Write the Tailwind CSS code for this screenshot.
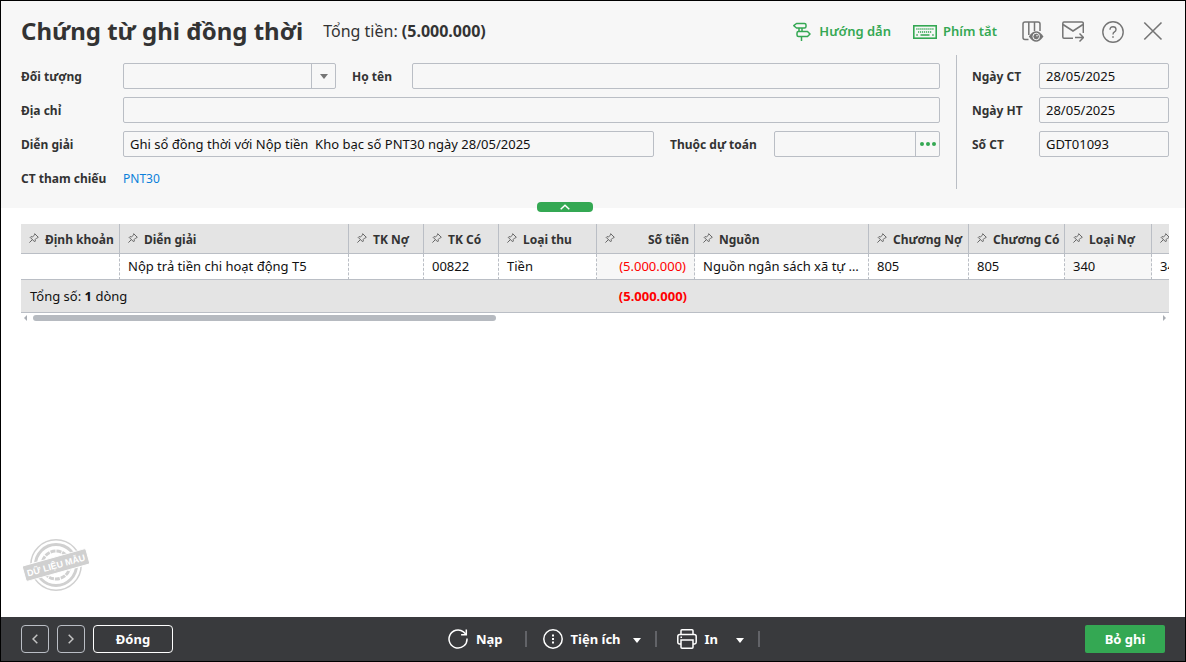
<!DOCTYPE html>
<html lang="vi">
<head>
    <meta charset="UTF-8">
    <meta name="viewport" content="width=device-width, initial-scale=1.0">
    <title>Chứng từ ghi đồng thời</title>
    <script src="https://cdn.jsdelivr.net/npm/@tailwindcss/browser@4"></script>
</head>
<body class="font-['Noto_Sans',sans-serif] text-[13px] text-[#111]">
<div class="flex flex-col min-h-screen border border-black bg-white">

    <!-- Header -->
    <header class="relative bg-[#f7f7f7]">
        <div class="flex items-center h-[54px] pt-1.5 pl-5 pr-[21px]">
            <h1 class="text-2xl font-bold text-[#333]">Chứng từ ghi đồng thời</h1>
            <p class="ml-5 text-base text-[#333]">Tổng tiền: <b>(5.000.000)</b></p>
            <div class="flex items-center ml-auto pt-0.5 text-[#34a853] font-semibold">
                <a href="#" class="flex items-center gap-2">
                    <svg class="w-[18px] h-5" viewBox="0 0 18 20" fill="none" stroke="currentColor" stroke-width="1.500" stroke-linejoin="round">
                        <path d="M3.500 1.500h8q1.500 0 1.500 1.500v1.500q0 1.500-1.500 1.500h-8L.8 3.700z"/>
                        <path d="M6 6v3M9 6v3"/>
                        <path d="M14.500 9.500H5.500Q4 9.500 4 11v2q0 1.500 1.500 1.500h9l2.500-2.500z"/>
                        <path d="M8.500 14.500V19"/>
                    </svg>
                    Hướng dẫn
                </a>
                <a href="#" class="flex items-center gap-1.5 ml-[22px]">
                    <svg class="w-6 h-[14px]" viewBox="0 0 24 14" fill="none" stroke="currentColor">
                        <rect x=".8" y=".8" width="22.400" height="12.400" stroke-width="1.600"/>
                        <path d="M3.300 4h17.600M5 7h14" stroke-width="1.400" stroke-dasharray="1.200 .8"/>
                        <path d="M3.300 10h1.500M7.500 10h9M19.200 10h1.500" stroke-width="1.600"/>
                    </svg>
                    Phím tắt
                </a>
            </div>
            <div class="flex items-center gap-[18px] ml-[25px] pt-0.5 text-[#757575]">
                <button type="button" aria-label="Tùy chỉnh cột">
                    <svg class="w-[22px] h-[22px]" viewBox="0 0 22 22" fill="none" stroke="currentColor" stroke-width="1.500">
                        <path d="M6.500 18.500H3Q1 18.500 1 16.500V3Q1 1 3 1h13q2 0 2 2v7M6.800 1v13M12.500 1v9"/>
                        <path d="M6.800 15.500q7.200-10.500 14.700 0q-7.500 10.500-14.700 0z" fill="currentColor" stroke="none"/>
                        <circle cx="14.200" cy="15.500" r="3.300" fill="currentColor" stroke="#f7f7f7" stroke-width="1"/>
                        <circle cx="15" cy="14.700" r=".8" fill="#f7f7f7" stroke="none"/>
                    </svg>
                </button>
                <button type="button" aria-label="Gửi thư">
                    <svg class="w-[22px] h-[22px]" viewBox="0 0 22 22" fill="none" stroke="currentColor" stroke-width="1.500">
                        <path d="M11 17.200H2Q.8 17.200.8 16V2.500Q.8 1 2 1h18q1.300 0 1.300 1.500V12"/>
                        <path d="M1 3.500l10 6.500 10-6.500M13 16.500h8M17.500 12.500l4 4-4 4"/>
                    </svg>
                </button>
                <button type="button" aria-label="Trợ giúp">
                    <svg class="w-[22px] h-[22px]" viewBox="0 0 22 22" fill="none" stroke="currentColor" stroke-width="1.400">
                        <circle cx="11" cy="11" r="10.200"/>
                        <path d="M8 8.700q0-2.900 3-2.900t3 2.700q0 1.500-1.500 2.400T11 13.500"/>
                        <path d="M11 15.200v1.600" stroke-width="1.600"/>
                    </svg>
                </button>
                <button type="button" aria-label="Đóng cửa sổ">
                    <svg class="w-[22px] h-[22px]" viewBox="0 0 22 22" fill="none" stroke="currentColor" stroke-width="1.600">
                        <path d="M2.300 1.500l17.200 17M19.500 1.500l-17.200 17"/>
                    </svg>
                </button>
            </div>
        </div>

        <form class="flex items-start pl-5 pr-4 pb-[17px]">
            <div class="flex-1 flex flex-col gap-2 pt-2">
                <div class="flex items-center h-[26px]">
                    <label for="object" class="w-[102px] pt-0.5 text-xs font-bold text-[#333]">Đối tượng</label>
                    <div class="relative w-[213px] h-full">
                        <select id="object" class="appearance-none w-full h-full border border-[#babec5] rounded-xs px-1.5"><option></option></select>
                        <span class="absolute right-0 top-0 flex items-center justify-center w-[25px] h-full border-l border-[#babec5] pointer-events-none">
                            <svg class="w-2 h-[5px]" viewBox="0 0 8 5" fill="#757575"><path d="M0 0h8L4 5z"/></svg>
                        </span>
                    </div>
                    <label for="fullname" class="w-[60px] ml-4 pt-0.5 text-xs font-bold text-[#333]">Họ tên</label>
                    <input id="fullname" type="text" class="flex-1 h-full border border-[#babec5] rounded-xs px-1.5">
                </div>
                <div class="flex items-center h-[26px]">
                    <label for="address" class="w-[102px] pt-0.5 text-xs font-bold text-[#333]">Địa chỉ</label>
                    <input id="address" type="text" class="flex-1 h-full border border-[#babec5] rounded-xs px-1.5">
                </div>
                <div class="flex items-center h-[26px]">
                    <label for="description" class="w-[102px] pt-0.5 text-xs font-bold text-[#333]">Diễn giải</label>
                    <input id="description" type="text" value="Ghi sổ đồng thời với Nộp tiền  Kho bạc số PNT30 ngày 28/05/2025" class="flex-1 h-full border border-[#babec5] rounded-xs px-1.5">
                    <label for="estimate" class="w-[104px] ml-4 pt-0.5 text-xs font-bold text-[#333]">Thuộc dự toán</label>
                    <div class="flex w-[166px] h-full border border-[#babec5] rounded-xs">
                        <input id="estimate" type="text" class="flex-1 min-w-0 px-1.5">
                        <button type="button" aria-label="Chọn dự toán" class="flex items-center justify-center w-6 border-l border-[#babec5]">
                            <svg class="w-4 h-1" viewBox="0 0 16 4" fill="#34a853"><circle cx="2" cy="2" r="2"/><circle cx="8" cy="2" r="2"/><circle cx="14" cy="2" r="2"/></svg>
                        </button>
                    </div>
                </div>
                <div class="flex items-center h-[26px]">
                    <span class="w-[102px] pt-0.5 text-xs font-bold text-[#333]">CT tham chiếu</span>
                    <a href="#" class="pt-0.5 text-xs text-[#0b7fda]">PNT30</a>
                </div>
            </div>

            <div class="flex flex-col gap-2 ml-4 pl-[15px] pt-2 pb-8 border-l border-[#babec5]">
                <div class="flex items-center h-[26px]">
                    <label for="doc-date" class="w-[67px] pt-0.5 text-xs font-bold text-[#333]">Ngày CT</label>
                    <input id="doc-date" type="text" value="28/05/2025" class="w-[130px] h-full border border-[#babec5] rounded-xs px-1.5">
                </div>
                <div class="flex items-center h-[26px]">
                    <label for="post-date" class="w-[67px] pt-0.5 text-xs font-bold text-[#333]">Ngày HT</label>
                    <input id="post-date" type="text" value="28/05/2025" class="w-[130px] h-full border border-[#babec5] rounded-xs px-1.5">
                </div>
                <div class="flex items-center h-[26px]">
                    <label for="doc-no" class="w-[67px] pt-0.5 text-xs font-bold text-[#333]">Số CT</label>
                    <input id="doc-no" type="text" value="GDT01093" class="w-[130px] h-full border border-[#babec5] rounded-xs px-1.5">
                </div>
            </div>
        </form>

        <!-- Collapse handle -->
        <button type="button" aria-label="Thu gọn" class="absolute left-1/2 -ml-14 -bottom-1 flex items-center justify-center w-14 h-2.5 rounded bg-[#34a853]">
            <svg class="w-2.5 h-1.5" viewBox="0 0 10 6" fill="none" stroke="#fff" stroke-width="1.500"><path d="M.7 5.200L5 1.200l4.300 4"/></svg>
        </button>
    </header>

    <!-- Detail grid -->
    <main class="flex-1 flex flex-col pt-4 pl-5 pr-4">
        <div class="overflow-hidden">
            <table class="table-fixed w-[1227px] border-separate border-spacing-0 text-left whitespace-nowrap">
                <colgroup>
                    <col class="w-[99px]"><col class="w-[229px]"><col class="w-[75px]"><col class="w-[75px]"><col class="w-[98px]"><col class="w-[98px]">
                    <col class="w-[174px]"><col class="w-[100px]"><col class="w-[96px]"><col class="w-[87px]"><col class="w-[96px]">
                </colgroup>
                <thead id="grid-head"></thead>
                <tbody id="grid-body"></tbody>
                <tfoot>
                    <tr class="h-[33px] bg-[#e4e4e4]">
                        <td colspan="5" class="pt-0.5 pl-[9px] border-b border-[#babec5]">Tổng số: <b>1</b> dòng</td>
                        <td class="pt-0.5 pr-2 text-right font-bold text-[#f00] border-b border-[#babec5]">(5.000.000)</td>
                        <td colspan="5" class="border-b border-[#babec5]"></td>
                    </tr>
                </tfoot>
            </table>
        </div>
        <div class="flex items-center h-2.5 px-[3px]">
            <svg class="w-[3px] h-1.5" viewBox="0 0 3 6" fill="#a9adb3"><path d="M3 0v6L0 3z"/></svg>
            <div class="flex-1 mx-1.5">
                <div id="scroll-thumb" class="h-1.5 rounded-full bg-[#b6bac0]"></div>
            </div>
            <svg class="w-[3px] h-1.5" viewBox="0 0 3 6" fill="#a9adb3"><path d="M0 0v6l3-3z"/></svg>
        </div>

        <!-- Sample data stamp -->
        <svg class="w-[68px] h-[54px] mt-auto ml-px mb-[25px]" viewBox="0 0 68 54" fill="none" stroke="#d0d0d0">
            <circle cx="34" cy="27" r="25.200" stroke-width="1.500"/>
            <circle cx="34" cy="27" r="20.500" stroke-width="3"/>
            <circle cx="34" cy="27" r="14" stroke-width="3" stroke-dasharray="5 1"/>
            <g transform="rotate(-15.500 34 27)">
                <rect x="1" y="19" width="66" height="16" rx="1.500" fill="#d0d0d0" stroke="#fff"/>
                <text x="34" y="30.500" text-anchor="middle" font-family="Liberation Sans, sans-serif" font-size="9" font-weight="700" fill="#fff" stroke="none">DỮ LIỆU MẪU</text>
            </g>
        </svg>
    </main>

    <!-- Toolbar -->
    <footer class="grid grid-cols-[1fr_auto_1fr] items-center h-11 px-5 bg-[#393a3d] text-white font-bold">
        <div class="flex gap-2">
            <button type="button" aria-label="Trước" class="flex items-center justify-center w-7 h-7 border border-[#babec5] rounded">
                <svg class="w-1.5 h-2.5" viewBox="0 0 6 10" fill="none" stroke="#c4c4c4" stroke-width="1.500"><path d="M5.300.7L1 5l4.300 4.300"/></svg>
            </button>
            <button type="button" aria-label="Sau" class="flex items-center justify-center w-7 h-7 border border-[#babec5] rounded">
                <svg class="w-1.5 h-2.5" viewBox="0 0 6 10" fill="none" stroke="#c4c4c4" stroke-width="1.500"><path d="M.7.7L5 5 .7 9.300"/></svg>
            </button>
            <button type="button" class="w-20 h-7 pt-0.5 border border-white rounded">Đóng</button>
        </div>
        <div class="flex items-center pl-[22px]">
            <button type="button" class="flex items-center gap-2">
                <svg class="w-5 h-5" viewBox="0 0 20 20" fill="none" stroke="#fff" stroke-width="1.500">
                    <path d="M19 9.500A9 9 0 1 1 15.500 2.900L18 5.300"/><path d="M18.300.5v5.200h-5.200"/>
                </svg>
                <span class="pt-0.5">Nạp</span>
            </button>
            <span class="w-0.5 h-4 ml-[22px] mr-4 bg-[#626368]"></span>
            <button type="button" class="flex items-center gap-2">
                <svg class="w-5 h-5" viewBox="0 0 20 20" fill="none" stroke="#fff" stroke-width="1.500">
                    <circle cx="10" cy="10" r="9.200"/><path d="M10 5.500v2M10 9v2M10 12.500v2" stroke-width="2"/>
                </svg>
                <span class="pt-0.5">Tiện ích</span>
                <svg class="w-2 h-[5px] mt-0.5 ml-1" viewBox="0 0 8 5" fill="#fff"><path d="M0 0h8L4 5z"/></svg>
            </button>
            <span class="w-0.5 h-4 ml-3.5 mr-5 bg-[#626368]"></span>
            <button type="button" class="flex items-center gap-2">
                <svg class="w-5 h-5" viewBox="0 0 20 20" fill="none" stroke="#fff" stroke-width="1.500">
                    <path d="M4 5.500V1.800q0-1 1-1h10q1 0 1 1v3.700"/>
                    <path d="M4 15H2.500Q.8 15 .8 13.300V7.500q0-2 2-2h14.400q2 0 2 2v5.800q0 1.700-1.700 1.700H16"/>
                    <path d="M4 11h12v7.200q0 1-1 1H5q-1 0-1-1zM3.500 8.200h1.500"/>
                </svg>
                <span class="pt-0.5">In</span>
                <svg class="w-2 h-[5px] mt-0.5 ml-2.5" viewBox="0 0 8 5" fill="#fff"><path d="M0 0h8L4 5z"/></svg>
            </button>
            <span class="w-0.5 h-4 ml-3.5 bg-[#626368]"></span>
        </div>
        <button type="button" class="justify-self-end w-20 h-7 pt-0.5 rounded-xs bg-[#34a853]">Bỏ ghi</button>
    </footer>
</div>

<script>
    let columns = [
        { title: "Định khoản", value: "" },
        { title: "Diễn giải", value: "Nộp trả tiền chi hoạt động T5" },
        { title: "TK Nợ", value: "" },
        { title: "TK Có", value: "00822" },
        { title: "Loại thu", value: "Tiền" },
        { title: "Số tiền", value: "(5.000.000)", amount: true, readonly: true },
        { title: "Nguồn", value: "Nguồn ngân sách xã tự chủ" },
        { title: "Chương Nợ", value: "805" },
        { title: "Chương Có", value: "805" },
        { title: "Loại Nợ", value: "340", readonly: true },
        { title: "Loại Có", value: "340" }
    ];

    let pin = `
        <svg class="shrink-0 w-2.5 h-2.5 -mt-1" viewBox="0 0 10 10" fill="none" stroke="#666" stroke-width="1">
            <path d="M5.700.7l3.600 3.600-.8.500-.5-.1-1.800 1.800.1 1.600-.7.700-4.400-4.400.7-.700 1.700.1L5.700 1.900zM3.300 6.700L.4 9.600"/>
        </svg>`;

    document.querySelector("#grid-head").innerHTML = `<tr class="h-[30px] bg-[#e4e4e4]">${columns.map(col => `
        <th class="p-0 pt-0.5 pl-2 pr-[5px] border-b border-r border-[#babec5] text-xs font-bold text-[#333]">
            <div class="flex items-center gap-1.5 ${col.amount ? "justify-between" : ""}">${pin}<span>${col.title}</span></div>
        </th>`).join("")}</tr>`;

    document.querySelector("#grid-body").innerHTML = `<tr class="h-[26px]">${columns.map(col => `
        <td class="p-0 px-2 border-b border-r border-[#babec5] [border-right-style:dashed] overflow-hidden text-ellipsis ${col.readonly ? "bg-[#f7f7f7]" : ""} ${col.amount ? "text-right text-[#f00]" : ""}">${col.value}</td>`).join("")}</tr>`;

    // Share of the grid that is visible
    document.querySelector("#scroll-thumb").style.width = "41.2%";
</script>
</body>
</html>
